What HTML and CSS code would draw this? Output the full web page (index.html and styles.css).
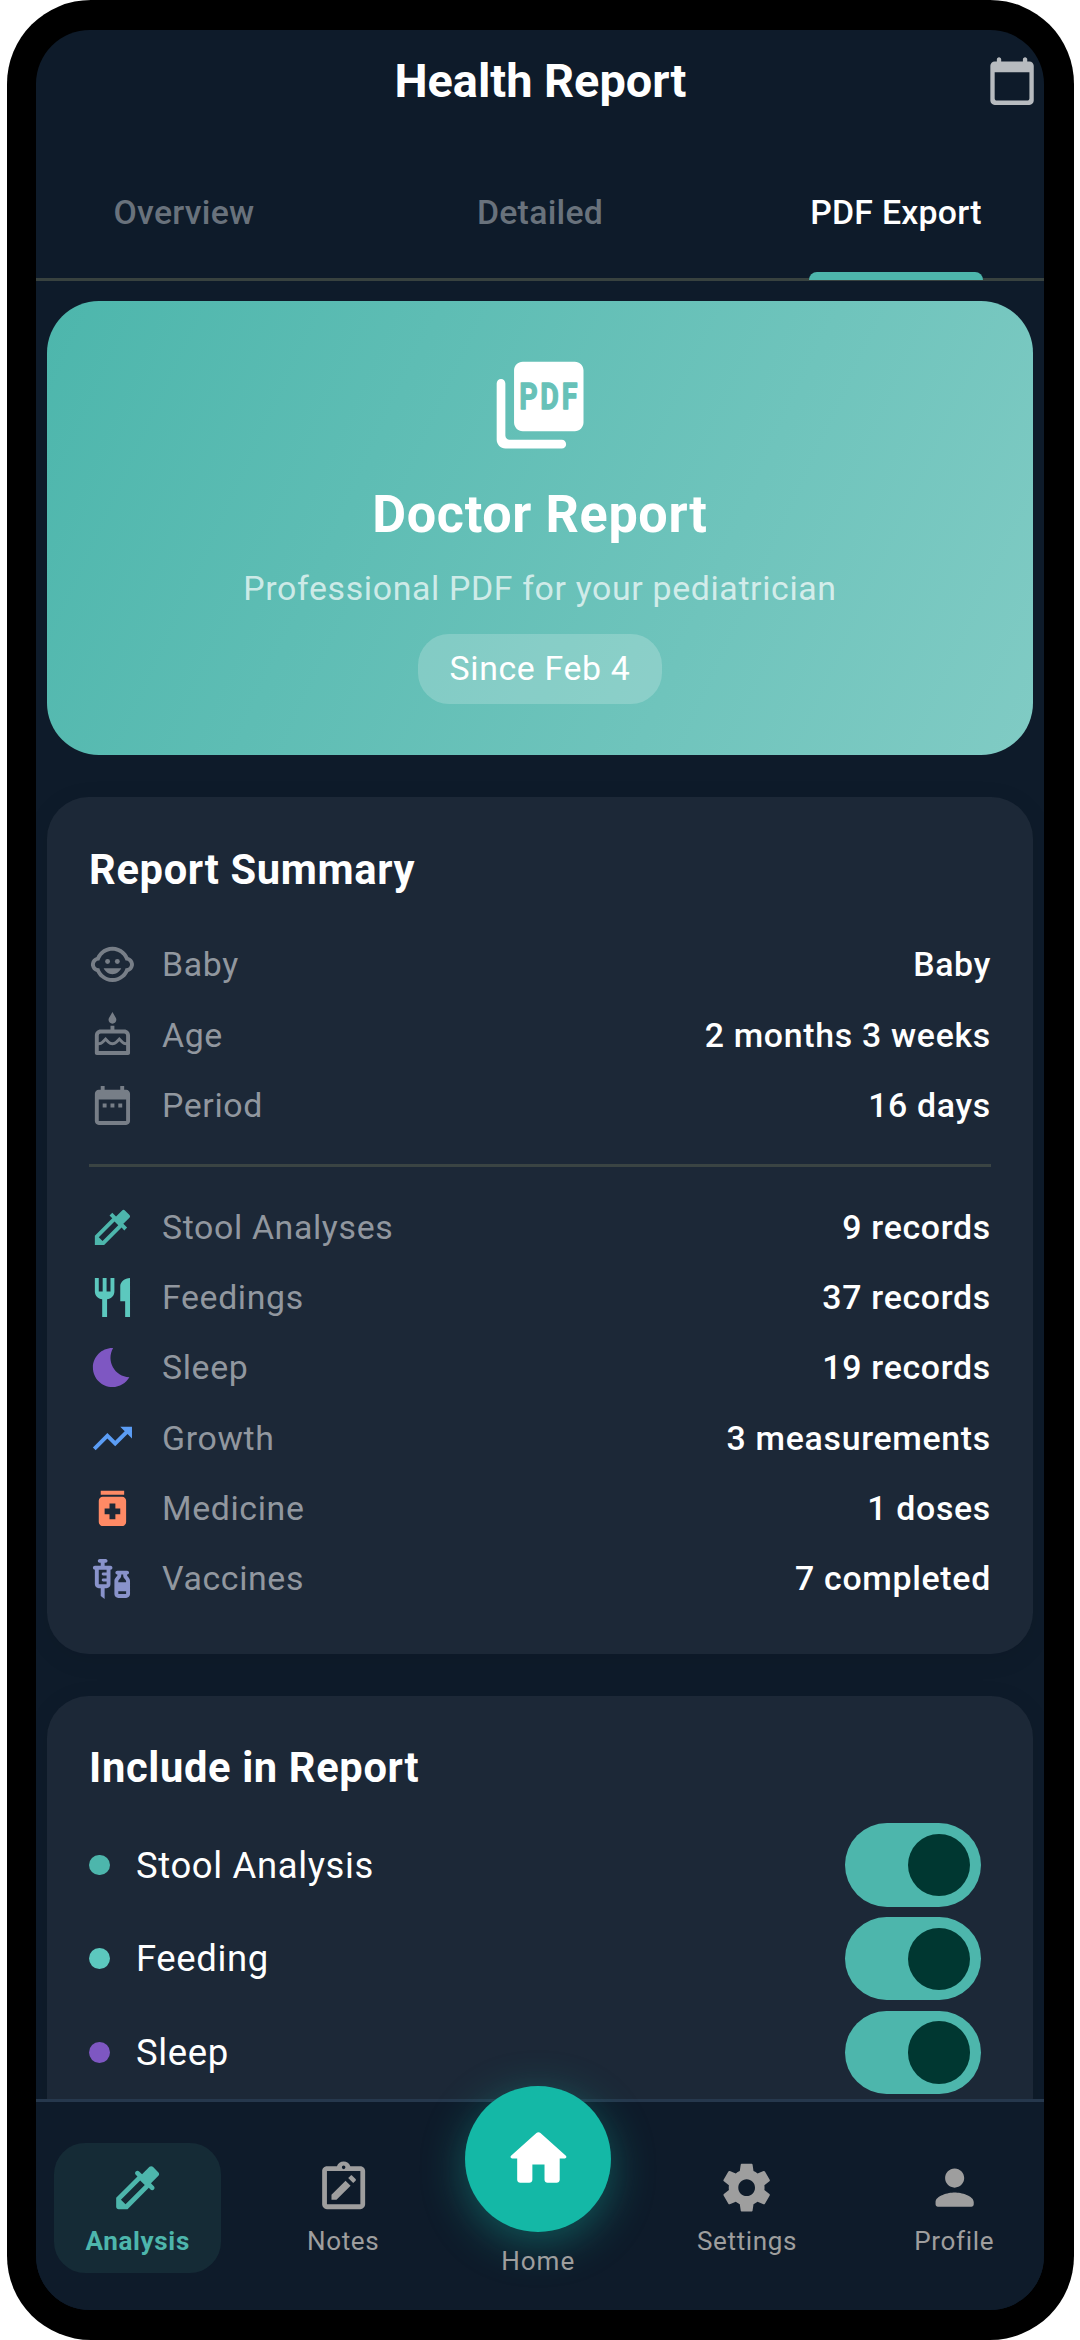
FILE: index.html
```html
<!DOCTYPE html>
<html lang="en">
<head>
  <meta charset="UTF-8">
  <meta name="viewport" content="width=device-width, initial-scale=1.0">
  <title>Health Report</title>
  <link rel="stylesheet" href="styles.css">
</head>
<body>

  <div class="phone">
    <div class="screen">

      <header class="app-bar">
        <h1>Health Report</h1>
        <svg class="calendar-btn" viewBox="0 0 24 24"><path d="M20 3h-1V2c0-.55-.45-1-1-1s-1 .45-1 1v1H7V2c0-.55-.45-1-1-1s-1 .45-1 1v1H4c-1.1 0-2 .9-2 2v16c0 1.1.9 2 2 2h16c1.1 0 2-.9 2-2V5c0-1.1-.9-2-2-2zm-1 18H5c-.55 0-1-.45-1-1V8h16v12c0 .55-.45 1-1 1z"/></svg>
      </header>

      <nav class="tabs">
        <div class="tab"><span>Overview</span></div>
        <div class="tab"><span>Detailed</span></div>
        <div class="tab active"><span>PDF Export</span></div>
      </nav>

      <main class="content">

        <section class="hero">
          <svg class="hero-icon" viewBox="0 0 24 24">
            <path d="M20 2H8c-1.1 0-2 .9-2 2v12c0 1.1.9 2 2 2h12c1.1 0 2-.9 2-2V4c0-1.1-.9-2-2-2zM3 6c-.55 0-1 .45-1 1v13c0 1.1.9 2 2 2h13c.55 0 1-.45 1-1s-.45-1-1-1H5c-.55 0-1-.45-1-1V7c0-.55-.45-1-1-1z"/>
            <text class="hero-icon-text" x="7.2" y="12.85" textLength="14" lengthAdjust="spacingAndGlyphs">PDF</text>
          </svg>
          <h2>Doctor Report</h2>
          <p>Professional PDF for your pediatrician</p>
          <span class="pill">Since Feb 4</span>
        </section>

        <section class="card">
          <h3>Report Summary</h3>
          <div class="row">
            <svg class="icon muted" viewBox="0 0 24 24"><circle cx="14.5" cy="10.5" r="1.25"/><circle cx="9.5" cy="10.5" r="1.25"/><path d="M22.94 12.66c.04-.21.06-.43.06-.66s-.02-.45-.06-.66c-.25-1.51-1.36-2.74-2.81-3.17-.53-1.12-1.28-2.1-2.19-2.91C16.36 3.85 14.28 3 12 3s-4.36.85-5.94 2.26c-.92.81-1.67 1.8-2.19 2.91-1.45.43-2.56 1.65-2.81 3.17-.04.21-.06.43-.06.66s.02.45.06.66c.25 1.51 1.36 2.74 2.81 3.17.52 1.11 1.27 2.09 2.17 2.89C7.62 20.14 9.71 21 12 21s4.38-.86 5.97-2.28c.9-.8 1.65-1.79 2.17-2.89 1.44-.43 2.55-1.65 2.8-3.17zM19 14c-.1 0-.19-.02-.29-.03-.2.67-.49 1.29-.86 1.86C16.6 17.74 14.45 19 12 19s-4.6-1.26-5.85-3.17c-.37-.57-.66-1.19-.86-1.86-.1.01-.19.03-.29.03-1.1 0-2-.9-2-2s.9-2 2-2c.1 0 .19.02.29.03.2-.67.49-1.29.86-1.86C7.4 6.26 9.55 5 12 5s4.6 1.26 5.85 3.17c.37.57.66 1.19.86 1.86.1-.01.19-.03.29-.03 1.1 0 2 .9 2 2s-.9 2-2 2zM7.5 14c.76 1.77 2.49 3 4.5 3s3.74-1.23 4.5-3h-9z"/></svg>
            <span class="label">Baby</span>
            <span class="value">Baby</span>
          </div>
          <div class="row">
            <svg class="icon muted" viewBox="0 0 24 24"><path d="M12 6c1.11 0 2-.9 2-2 0-.38-.1-.73-.29-1.03L12 0l-1.71 2.97c-.19.3-.29.65-.29 1.03 0 1.1.9 2 2 2zm6 3h-5V7h-2v2H6c-1.66 0-3 1.34-3 3v9c0 .55.45 1 1 1h16c.55 0 1-.45 1-1v-9c0-1.66-1.34-3-3-3zm1 11H5v-3c.9-.01 1.76-.37 2.4-1.01l1.09-1.07 1.07 1.07c1.31 1.31 3.59 1.3 4.89 0l1.08-1.07 1.07 1.07c.64.64 1.5 1 2.4 1.01v3zm0-4.5c-.51-.01-.99-.2-1.35-.57l-2.13-2.13-2.14 2.13c-.74.74-2.03.74-2.77 0L8.48 12.8l-2.14 2.13c-.35.36-.83.56-1.34.57V12c0-.55.45-1 1-1h12c.55 0 1 .45 1 1v3.5z"/></svg>
            <span class="label">Age</span>
            <span class="value">2 months 3 weeks</span>
          </div>
          <div class="row">
            <svg class="icon muted" viewBox="0 0 24 24"><path d="M9 11H7v2h2v-2zm4 0h-2v2h2v-2zm4 0h-2v2h2v-2zm2-7h-1V2h-2v2H8V2H6v2H5c-1.11 0-1.99.9-1.99 2L3 20c0 1.1.89 2 2 2h14c1.1 0 2-.9 2-2V6c0-1.1-.9-2-2-2zm0 16H5V9h14v11z"/></svg>
            <span class="label">Period</span>
            <span class="value">16 days</span>
          </div>

          <div class="divider"></div>

          <div class="row">
            <svg class="icon teal" viewBox="0 0 24 24"><path d="M20.71 5.63l-2.34-2.34c-.39-.39-1.02-.39-1.41 0l-3.12 3.12-1.93-1.91-1.41 1.41 1.42 1.42L3 16.25V21h4.75l8.92-8.92 1.42 1.42 1.41-1.41-1.92-1.92 3.12-3.12c.4-.4.4-1.03.01-1.42zM6.92 19L5 17.08l8.06-8.06 1.92 1.92L6.92 19z"/></svg>
            <span class="label">Stool Analyses</span>
            <span class="value">9 records</span>
          </div>
          <div class="row">
            <svg class="icon mint" viewBox="0 0 24 24"><path d="M11 9H9V2H7v7H5V2H3v7c0 2.12 1.66 3.84 3.75 3.97V22h2.5v-9.03C11.34 12.84 13 11.12 13 9V2h-2v7zm5-3v8h2.5v8H21V2c-2.76 0-5 2.24-5 4z"/></svg>
            <span class="label">Feedings</span>
            <span class="value">37 records</span>
          </div>
          <div class="row">
            <svg class="icon purple" viewBox="0 0 24 24"><path d="M12.34 2.02C6.59 1.82 2 6.42 2 12c0 5.52 4.48 10 10 10 3.71 0 6.93-2.02 8.66-5.02-7.51-.25-12.09-8.43-8.32-14.96z"/></svg>
            <span class="label">Sleep</span>
            <span class="value">19 records</span>
          </div>
          <div class="row">
            <svg class="icon blue" viewBox="0 0 24 24"><path d="M16 6l2.29 2.29-4.88 4.88-4-4L2 16.59 3.41 18l6-6 4 4 6.3-6.29L22 12V6z"/></svg>
            <span class="label">Growth</span>
            <span class="value">3 measurements</span>
          </div>
          <div class="row">
            <svg class="icon orange" viewBox="0 0 24 24"><path d="M6 3h12v2H6zm11 3H7c-1.1 0-2 .9-2 2v11c0 1.1.9 2 2 2h10c1.1 0 2-.9 2-2V8c0-1.1-.9-2-2-2zm-1 9h-2.5v2.5h-3V15H8v-3h2.5V9.5h3V12H16v3z"/></svg>
            <span class="label">Medicine</span>
            <span class="value">1 doses</span>
          </div>
          <div class="row">
            <svg class="icon indigo" viewBox="0 0 24 24"><path fill-rule="evenodd" d="M11 5.5H8V4h.5c.55 0 1-.45 1-1s-.45-1-1-1h-3c-.55 0-1 .45-1 1s.45 1 1 1H6v1.5H3c-.55 0-1 .45-1 1s.45 1 1 1V15c0 1.1.9 2 2 2h1v4l2 1.5V17h1c1.1 0 2-.9 2-2V7.5c.55 0 1-.45 1-1s-.45-1-1-1zM9 9H7.25c-.41 0-.75.34-.75.75s.34.75.75.75H9V12H7.25c-.41 0-.75.34-.75.75s.34.75.75.75H9V15H5V7.5h4V9zM19.5 10.5V10c.55 0 1-.45 1-1s-.45-1-1-1h-5c-.55 0-1 .45-1 1s.45 1 1 1v.5c0 .5-1.5 1.16-1.5 3V20c0 1.1.9 2 2 2h4c1.1 0 2-.9 2-2v-6.5c0-1.84-1.5-2.5-1.5-3zM16.5 10.5V10h1v.5c0 1.6 1.5 2 1.5 3V14h-4v-.5c0-1 1.5-1.4 1.5-3zM19 20h-4v-1.5h4V20z"/></svg>
            <span class="label">Vaccines</span>
            <span class="value">7 completed</span>
          </div>
        </section>

        <section class="card include">
          <h3>Include in Report</h3>
          <div class="option">
            <span class="dot teal"></span>
            <span class="option-name">Stool Analysis</span>
            <span class="switch"></span>
          </div>
          <div class="option">
            <span class="dot mint"></span>
            <span class="option-name">Feeding</span>
            <span class="switch"></span>
          </div>
          <div class="option">
            <span class="dot purple"></span>
            <span class="option-name">Sleep</span>
            <span class="switch"></span>
          </div>
        </section>

      </main>

      <nav class="bottom-nav">
        <div class="nav-item active">
          <svg viewBox="0 0 24 24"><path d="M20.71 5.63l-2.34-2.34c-.39-.39-1.02-.39-1.41 0l-3.12 3.12-1.22-1.21c-.39-.39-1.02-.39-1.41 0s-.39 1.02 0 1.41l.72.71L3 16.25V20c0 .55.45 1 1 1h3.75l8.92-8.92.71.71c.39.39 1.02.39 1.41 0s.39-1.02 0-1.41l-1.21-1.21 3.12-3.12c.4-.4.4-1.03.01-1.42zM6.92 19L5 17.08l8.06-8.06 1.92 1.92L6.92 19z"/></svg>
          <span>Analysis</span>
        </div>
        <div class="nav-item">
          <svg viewBox="0 0 24 24"><path fill-rule="evenodd" d="M19 3h-4.18C14.4 1.84 13.3 1 12 1s-2.4.84-2.82 2H5c-1.1 0-2 .9-2 2v14c0 1.1.9 2 2 2h14c1.1 0 2-.9 2-2V5c0-1.1-.9-2-2-2zm-7-.25a.75.75 0 1 1 0 1.5.75.75 0 0 1 0-1.5zM19 19H5V5h14v14z"/><path d="M6.9 15v2.1H9l5.9-5.9-2.1-2.1zM13.9 8l1-1c.2-.2.5-.2.7 0l1.4 1.4c.2.2.2.5 0 .7l-1 1z"/></svg>
          <span>Notes</span>
        </div>
        <div class="nav-item home">
          <div class="home-btn">
            <svg viewBox="0 0 24 24"><path d="M10 19v-5h4v5c0 .55.45 1 1 1h3c.55 0 1-.45 1-1v-7h1.7c.46 0 .68-.57.33-.87L12.67 3.6c-.38-.34-.96-.34-1.34 0l-8.36 7.53c-.34.3-.13.87.33.87H5v7c0 .55.45 1 1 1h3c.55 0 1-.45 1-1z"/></svg>
          </div>
          <span>Home</span>
        </div>
        <div class="nav-item">
          <svg viewBox="0 0 24 24"><path d="M19.43 12.98c.04-.32.07-.64.07-.98s-.03-.66-.07-.98l2.11-1.65c.19-.15.24-.42.12-.64l-2-3.46c-.12-.22-.39-.3-.61-.22l-2.49 1c-.52-.4-1.08-.73-1.69-.98l-.38-2.65C14.46 2.18 14.25 2 14 2h-4c-.25 0-.46.18-.49.42l-.38 2.65c-.61.25-1.17.59-1.69.98l-2.49-1c-.23-.09-.49 0-.61.22l-2 3.46c-.13.22-.07.49.12.64l2.11 1.65c-.04.32-.07.65-.07.98s.03.66.07.98l-2.11 1.65c-.19.15-.24.42-.12.64l2 3.46c.12.22.39.3.61.22l2.49-1c.52.4 1.08.73 1.69.98l.38 2.65c.03.24.24.42.49.42h4c.25 0 .46-.18.49-.42l.38-2.65c.61-.25 1.17-.59 1.69-.98l2.49 1c.23.09.49 0 .61-.22l2-3.46c.12-.22.07-.49-.12-.64l-2.11-1.65zM12 15.5c-1.93 0-3.5-1.57-3.5-3.5s1.57-3.5 3.5-3.5 3.5 1.57 3.5 3.5-1.57 3.5-3.5 3.5z"/></svg>
          <span>Settings</span>
        </div>
        <div class="nav-item">
          <svg viewBox="0 0 24 24"><path d="M12 12c2.21 0 4-1.79 4-4s-1.79-4-4-4-4 1.79-4 4 1.79 4 4 4zm0 2c-2.67 0-8 1.34-8 4v1c0 .55.45 1 1 1h14c.55 0 1-.45 1-1v-1c0-2.66-5.33-4-8-4z"/></svg>
          <span>Profile</span>
        </div>
      </nav>

    </div>
  </div>

</body>
</html>
```

FILE: styles.css
```css
* {
  box-sizing: border-box;
}

body {
  margin: 0;
  background-color: #fff;
  font-family: Roboto, sans-serif;
  letter-spacing: 0.65px;
  color: #fff;
}

h1, h2, h3, p {
  margin: 0;
}

svg {
  display: block;
  fill: currentColor;
  flex-shrink: 0;
}

.phone {
  width: 1067px;
  height: 2340px;
  margin-left: 6.5px;
  padding: 30px 29.5px;
  border-radius: 84px;
  background-color: #000;
}

.screen {
  height: 2280px;
  display: flex;
  flex-direction: column;
  border-radius: 54px;
  overflow: hidden;
  background-color: #0e1b2a;
}

/* top bar */
.app-bar {
  height: 102.6px;
  padding-right: 6.2px;
  display: grid;
  grid-template-columns: 1fr auto 1fr;
  align-items: center;
  flex-shrink: 0;
}

.app-bar h1 {
  grid-column: 2;
  padding-left: 7px;
  font-size: 46.88px;
  font-weight: 700;
  letter-spacing: 0;
}

.calendar-btn {
  justify-self: end;
  width: 52.1px;
  height: 52.1px;
  color: #b7bbbf;
}

.tabs {
  height: 148px;
  padding-top: 15px;
  margin: 0 -30px;
  display: grid;
  grid-template-columns: repeat(3, 1fr);
  border-bottom: 3px solid #38423f;
  flex-shrink: 0;
}

.tab {
  display: flex;
  justify-content: center;
  font-size: 33.85px;
  font-weight: 500;
  letter-spacing: 0.26px;
  color: #69727c;
}

.tab span {
  position: relative;
  display: flex;
  align-items: center;
}

.tab.active {
  color: #fff;
}

.tab.active span::after {
  content: "";
  position: absolute;
  left: -1px;
  right: -1px;
  bottom: -2.5px;
  height: 8px;
  border-radius: 8px 8px 0 0;
  background-color: #4db6ac;
}

/* scrolling content */
.content {
  flex: 1;
  min-height: 0;
  overflow: hidden;
  padding: 20.4px 11.4px 0;
}

.hero {
  height: 454.3px;
  padding-top: 52px;
  margin-bottom: 42px;
  display: flex;
  flex-direction: column;
  align-items: center;
  border-radius: 52px;
  background: linear-gradient(114.8deg, #4db6ac, #80cbc4);
}

.hero-icon {
  width: 104.2px;
  height: 104.2px;
}

.hero-icon-text {
  font-size: 8.4px;
  font-weight: 700;
  letter-spacing: 0.8px;
  fill: #67c1b8;
  stroke: #67c1b8;
  stroke-width: 0.3px;
  stroke-linejoin: round;
}

.hero h2 {
  margin-top: 22px;
  font-size: 52.08px;
  font-weight: 700;
  line-height: 72.6px;
}

.hero p {
  margin-top: 13px;
  font-size: 33.85px;
  line-height: 48px;
  color: rgba(255, 255, 255, 0.7);
}

.pill {
  margin-top: 21px;
  padding: 0 31.2px;
  border-radius: 31.2px;
  font-size: 33.85px;
  line-height: 70.3px;
  background-color: rgba(255, 255, 255, 0.2);
}

.card {
  padding: 41.7px 41.7px 40px;
  margin-bottom: 41.7px;
  border-radius: 41.7px;
  background-color: #1c2837;
  box-shadow: 0 5px 26px rgba(0, 0, 0, 0.08);
}

.card h3 {
  margin-bottom: 29px;
  font-size: 41.67px;
  font-weight: 700;
  line-height: 61.7px;
}

.row {
  height: 70.3px;
  display: flex;
  align-items: center;
  font-size: 33.85px;
}

.icon {
  width: 46.9px;
  height: 46.9px;
  margin-right: 26px;
}

.label {
  flex: 1;
  color: #91979f;
}

.value {
  font-weight: 500;
  letter-spacing: 0.7px;
}

.divider {
  height: 3px;
  margin: 23.6px 0 25px;
  background-color: #3a4443;
}

.muted { color: #777e87; }
.teal { color: #4db6ac; }
.mint { color: #5cc8be; }
.purple { color: #7e57c2; }
.blue { color: #5b9df5; }
.orange { color: #ff8a65; }
.indigo { color: #8993cb; }

.include h3 {
  margin-bottom: 19.2px;
}

.option {
  height: 93.75px;
  padding-right: 10.4px;
  display: flex;
  align-items: center;
  font-size: 36.46px;
}

.dot {
  width: 20.8px;
  height: 20.8px;
  margin-right: 26px;
  border-radius: 50%;
  background-color: currentColor;
}

.option-name {
  flex: 1;
}

.switch {
  width: 135.4px;
  height: 83.3px;
  padding: 10.4px;
  display: flex;
  justify-content: flex-end;
  border-radius: 42px;
  background-color: #4db6ac;
}

.switch::after {
  content: "";
  width: 62.5px;
  height: 62.5px;
  border-radius: 50%;
  background-color: #003731;
}

/* bottom navigation */
.bottom-nav {
  position: relative;
  z-index: 1;
  height: 211px;
  padding: 41px 18.6px 0 18.3px;
  display: flex;
  justify-content: space-between;
  align-items: flex-start;
  flex-shrink: 0;
  border-top: 3px solid #26384d;
  background-color: #0e1b2a;
}

.nav-item {
  padding: 15.6px 31.2px;
  display: flex;
  flex-direction: column;
  align-items: center;
  gap: 10.6px;
  border-radius: 31.2px;
  font-size: 26.04px;
  line-height: 30.6px;
  color: #9e9e9e;
}

.nav-item svg {
  width: 57.3px;
  height: 57.3px;
}

.nav-item.active {
  font-weight: 700;
  color: #4db6ac;
  background-color: #152b36;
}

.nav-item.home {
  margin-top: -57px;
  padding: 0;
  gap: 14.4px;
  letter-spacing: 1px;
}

.home-btn {
  width: 145.8px;
  height: 145.8px;
  display: flex;
  align-items: center;
  justify-content: center;
  border-radius: 50%;
  color: #fff;
  background-color: #14b8a6;
  box-shadow: 0 10px 44px rgba(20, 184, 166, 0.4);
}

.home-btn svg {
  width: 72.9px;
  height: 72.9px;
}
```
